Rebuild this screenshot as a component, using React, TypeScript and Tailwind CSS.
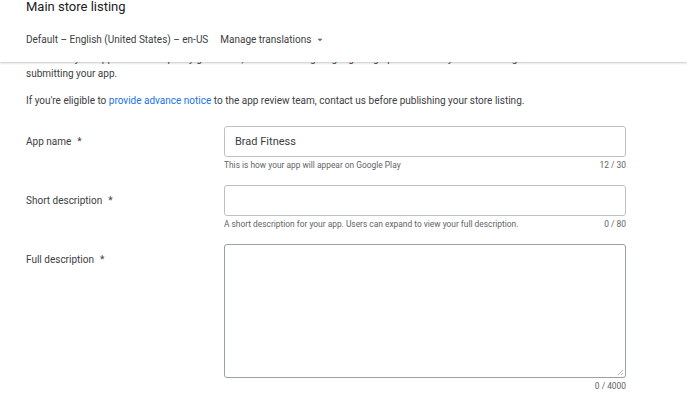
import { ChevronDown } from 'lucide-react';

interface FieldProps {
  label: string;
  value?: string;
  helper: string;
  count: string;
  tall?: boolean;
}

function Field({ label, value, helper, count, tall }: FieldProps) {
  return (
    <div className="flex">
      <div className={`w-[198px] shrink-0 text-[10px] text-[#3c4043] ${tall ? 'pt-[9px]' : 'pt-[9px]'}`}>
        {label}
        <span className="ml-[6px]">*</span>
      </div>
      <div className="w-[402px]">
        {tall ? (
          <div className="relative h-[134px] rounded-[3px] border border-[#9aa0a6]">
            <svg className="absolute right-[1px] bottom-[1px]" width="7" height="7" viewBox="0 0 7 7">
              <path d="M6 1 L1 6 M6 4 L4 6" stroke="#9aa0a6" strokeWidth="0.8" />
            </svg>
          </div>
        ) : (
          <div className="flex h-[31px] items-center rounded-[3px] border border-[#bdc1c6] px-[10px] text-[11px] text-[#3c4043]">
            {value}
          </div>
        )}
        <div className="mt-[3px] flex justify-between text-[8.4px] leading-[10px] text-[#5f6368]">
          <span>{helper}</span>
          <span>{count}</span>
        </div>
      </div>
    </div>
  );
}

export default function App() {
  return (
    <div className="h-[409px] w-[687px] overflow-hidden bg-white font-['Roboto',sans-serif]">
      <div className="relative z-10 h-[62px] bg-white px-[26px] shadow-[0_1px_2px_rgba(60,64,67,0.3)]">
        <h1 className="pt-0 text-[13px] leading-[14px] text-[#202124]">Main store listing</h1>
        <div className="mt-[20px] flex items-center text-[10px] leading-[12px] text-[#3c4043]">
          <span>Default – English (United States) – en-US</span>
          <span className="ml-[12px] text-[#3c4043]">Manage translations</span>
          <ChevronDown size={10} strokeWidth={0} fill="#5f6368" className="ml-[4px]" />
        </div>
      </div>

      <div className="-mt-[10px] px-[26px] text-[10px] leading-[13px] text-[#3c4043]">
        <p>
          Make sure your app follows our policy guidelines, and avoid using language or graphics that may be misleading before
        </p>
        <p className="mt-[2px]">submitting your app.</p>
        <p className="mt-[14px]">
          If you're eligible to <a className="text-[#1a73e8]">provide advance notice</a> to the app review team, contact us
          before publishing your store listing.
        </p>

        <div className="mt-[19px] flex flex-col gap-[15px]">
          <Field label="App name" value="Brad Fitness" helper="This is how your app will appear on Google Play" count="12 / 30" />
          <Field
            label="Short description"
            helper="A short description for your app. Users can expand to view your full description."
            count="0 / 80"
          />
          <Field label="Full description" helper="" count="0 / 4000" tall />
        </div>
      </div>
    </div>
  );
}
